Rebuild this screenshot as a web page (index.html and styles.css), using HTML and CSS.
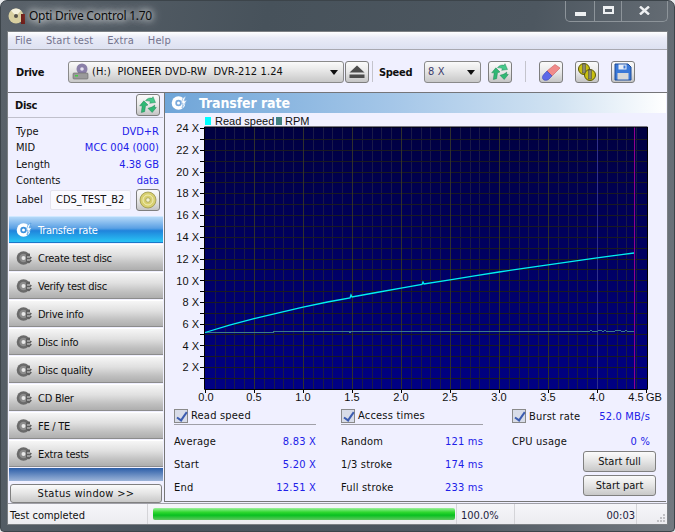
FILE: index.html
```html
<!DOCTYPE html>
<html lang="en">
<head>
<meta charset="utf-8">
<title>Opti Drive Control 1.70</title>
<link rel="stylesheet" href="styles.css">
</head>
<body>
<svg class="defs" width="0" height="0">
  <defs>
    <symbol id="swirl" viewBox="0 0 24 24">
      <path d="M4 21l1-8-3 0 5-6 5 5-3 1-1 7z" fill="#2fb874" stroke="#14794a" stroke-width=".5"/>
      <path d="M9 7c2-3 5-4 8-3l1-2 3 7-7 1 1-2c-2-1-4-1-6-1z" fill="#45c98a" stroke="#14794a" stroke-width=".5"/>
      <path d="M20 12l0 3 2 0-5 6-5-5 3-1c1 0 3-1 5-3z" fill="#2fb874" stroke="#14794a" stroke-width=".5"/>
    </symbol>
    <symbol id="navdisc" viewBox="0 0 16 16">
      <circle cx="7.5" cy="8" r="6.8" fill="#6a6a6a"/>
      <circle cx="7.5" cy="8" r="4.2" fill="#8c8c8c"/>
      <circle cx="7.5" cy="8" r="2" fill="#e8e8e8"/>
      <path d="M10 4.5l4-1v3l2 1-2 2 2 1-3 3-3-2z" fill="#5e5e5e"/>
      <path d="M11 7h3M11 10h3" stroke="#d8d8d8" stroke-width="1"/>
    </symbol>
  </defs>
</svg>
<div class="window">
  <header class="titlebar">
    <svg class="logo" width="18" height="18" viewBox="0 0 18 18">
      <circle cx="8" cy="9" r="7.5" fill="#d8cfa0"/>
      <path d="M8 9L3 3.5A7.5 7.5 0 0 1 13 3.5z" fill="#f4f0dc"/>
      <circle cx="8" cy="9" r="2" fill="#55514a"/>
      <rect x="13" y="7" width="4" height="10" fill="#6e1c18"/>
    </svg>
    <span class="apptitle">Opti Drive Control 1.70</span>
    <div class="winbtns">
      <span class="winbtn wb-min"><i></i></span>
      <span class="winbtn wb-max"><i></i></span>
      <span class="winbtn wb-close">
        <svg width="11" height="9" viewBox="0 0 11 9"><path d="M1 .5l9 8M10 .5l-9 8" stroke="#eef0f2" stroke-width="2.4"/></svg>
      </span>
    </div>
  </header>

  <div class="client">
    <nav class="menu">
      <span>File</span><span>Start test</span><span>Extra</span><span>Help</span>
    </nav>

    <div class="toolbar">
      <b class="tb-label drive-label">Drive</b>
      <div class="combo drive-combo">
        <svg class="drive-ico" width="18" height="18" viewBox="0 0 18 18">
          <circle cx="10" cy="6" r="5.5" fill="#8a7fa8"/>
          <circle cx="10" cy="6" r="1.8" fill="#e6e2f0"/>
          <rect x="1" y="10" width="15" height="6" rx="1" fill="#9a9a9a" stroke="#666" stroke-width=".6"/>
          <rect x="3" y="12" width="3" height="1.5" fill="#4c4"/>
        </svg>
        <span class="combo-text">(H:)&nbsp; PIONEER DVD-RW&nbsp; DVR-212 1.24</span>
        <i class="arrow"></i>
      </div>
      <button class="iconbtn eject">
        <svg width="16" height="14" viewBox="0 0 16 14"><path d="M8 .5L15.500 7.500H.5z" fill="#4c4c4c"/><rect x=".5" y="9.500" width="15" height="3.500" fill="#4c4c4c"/></svg>
      </button>
      <span class="vsep sep-a"></span>
      <b class="tb-label speed-label">Speed</b>
      <div class="combo speed-combo"><span class="combo-text speedval">8 X</span><i class="arrow"></i></div>
      <button class="iconbtn refresh-a"><svg width="20" height="20"><use href="#swirl"/></svg></button>
      <span class="vsep sep-b"></span>
      <button class="iconbtn">
        <svg width="20" height="18" viewBox="0 0 20 18">
          <path d="M6 8L14 1.500 19 5 11 13z" fill="#f08a8a" stroke="#c86060" stroke-width=".6"/>
          <path d="M6 8l5 5-3.500 3.500C5 18 2 17.500 1.500 15c-.3-2 1-3.500 4.500-7z" fill="#5c68e8" stroke="#3a44b0" stroke-width=".6"/>
        </svg>
      </button>
      <button class="iconbtn gapped">
        <svg width="20" height="20" viewBox="0 0 20 20">
          <circle cx="7" cy="7" r="5.500" fill="#c9c010" stroke="#5c5808"/>
          <circle cx="13" cy="13" r="5.500" fill="#c9c010" stroke="#5c5808"/>
          <rect x="5.500" y="2" width="3" height="9" fill="#8a8a70" stroke="#444" stroke-width=".5"/>
          <rect x="11.500" y="8" width="3" height="9" fill="#8a8a70" stroke="#444" stroke-width=".5"/>
        </svg>
      </button>
      <button class="iconbtn gapped">
        <svg width="18" height="18" viewBox="0 0 18 18">
          <path d="M1 1h13l3 3v13H1z" fill="#3a78d8" stroke="#1c4a98"/>
          <rect x="4.500" y="1.500" width="8" height="5" fill="#e8eef8"/>
          <rect x="9.500" y="2.500" width="2" height="3" fill="#3a78d8"/>
          <rect x="3.500" y="10" width="11" height="6.500" fill="#d8d8d8"/>
        </svg>
      </button>
    </div>

    <div class="main">
      <aside class="side">
        <div class="disc-head">
          <b>Disc</b>
          <button class="iconbtn"><svg width="20" height="20"><use href="#swirl"/></svg></button>
        </div>
        <dl class="disc-info">
          <div><dt>Type</dt><dd>DVD+R</dd></div>
          <div><dt>MID</dt><dd>MCC 004 (000)</dd></div>
          <div><dt>Length</dt><dd>4.38 GB</dd></div>
          <div><dt>Contents</dt><dd>data</dd></div>
        </dl>
        <div class="label-row">
          <span>Label</span>
          <span class="label-field">CDS_TEST_B2</span>
          <button class="iconbtn">
            <svg width="18" height="18" viewBox="0 0 18 18">
              <circle cx="9" cy="9" r="8" fill="#d8d070" stroke="#8f8a40" stroke-width=".7"/>
              <circle cx="9" cy="9" r="5" fill="none" stroke="#f2eeb8"/>
              <circle cx="9" cy="9" r="2.200" fill="#f4f2d0" stroke="#8f8a40" stroke-width=".6"/>
            </svg>
          </button>
        </div>
        <div class="navlist">
          <a class="navbtn active">
            <svg width="16" height="16" viewBox="0 0 16 16">
              <circle cx="7.500" cy="8" r="6.800" fill="#fff"/><circle cx="7.500" cy="8" r="3.200" fill="#3a90dc"/><circle cx="7.500" cy="8" r="1.500" fill="#fff"/>
              <path d="M12 3l3-2-2 5 3-1-5 8 1-5-2 .5z" fill="#fff" stroke="#3a90dc" stroke-width=".6"/>
            </svg><span>Transfer rate</span>
          </a>
          <a class="navbtn"><svg width="16" height="16"><use href="#navdisc"/></svg><span>Create test disc</span></a>
          <a class="navbtn"><svg width="16" height="16"><use href="#navdisc"/></svg><span>Verify test disc</span></a>
          <a class="navbtn"><svg width="16" height="16"><use href="#navdisc"/></svg><span>Drive info</span></a>
          <a class="navbtn"><svg width="16" height="16"><use href="#navdisc"/></svg><span>Disc info</span></a>
          <a class="navbtn"><svg width="16" height="16"><use href="#navdisc"/></svg><span>Disc quality</span></a>
          <a class="navbtn"><svg width="16" height="16"><use href="#navdisc"/></svg><span>CD Bler</span></a>
          <a class="navbtn"><svg width="16" height="16"><use href="#navdisc"/></svg><span>FE / TE</span></a>
          <a class="navbtn"><svg width="16" height="16"><use href="#navdisc"/></svg><span>Extra tests</span></a>
        </div>
        <div class="nav-band"></div>
        <button class="status-btn">Status window &gt;&gt;</button>
      </aside>

      <section class="panel">
        <div class="panel-title">
          <svg width="16" height="16" viewBox="0 0 16 16">
            <circle cx="7.500" cy="8" r="6.800" fill="#fff"/><circle cx="7.500" cy="8" r="3.200" fill="#7aaadc"/><circle cx="7.500" cy="8" r="1.500" fill="#fff"/>
            <path d="M12 3l3-2-2 5 3-1-5 8 1-5-2 .5z" fill="#fff" stroke="#7aaadc" stroke-width=".6"/>
          </svg>
          <span>Transfer rate</span>
        </div>

        <svg class="chart" width="500" height="292" viewBox="165 113 500 292">
          <defs>
            <linearGradient id="plotbg" x1="0" y1="0" x2="0" y2="1">
              <stop offset="0" stop-color="#000040"/>
              <stop offset="1" stop-color="#000084"/>
            </linearGradient>
          </defs>
          <rect x="205" y="117" width="6" height="8" fill="#00ffff"/>
          <text class="lg" x="215" y="125">Read speed</text>
          <rect x="276" y="117" width="6" height="8" fill="#408080"/>
          <text class="lg" x="285" y="125">RPM</text>

          <rect x="205" y="127" width="442" height="262" fill="url(#plotbg)"/>
          <path class="grid-minor" d="M215 127V389M225 127V389M234 127V389M244 127V389M264 127V389M274 127V389M283 127V389M293 127V389M313 127V389M323 127V389M332 127V389M342 127V389M362 127V389M372 127V389M381 127V389M391 127V389M411 127V389M421 127V389M430 127V389M440 127V389M460 127V389M470 127V389M479 127V389M489 127V389M509 127V389M519 127V389M528 127V389M538 127V389M558 127V389M568 127V389M577 127V389M587 127V389M607 127V389M617 127V389M626 127V389M636 127V389"/>
          <path class="grid-h" d="M205 378H647M205 367H647M205 356H647M205 345H647M205 334H647M205 324H647M205 313H647M205 302H647M205 291H647M205 280H647M205 269H647M205 259H647M205 248H647M205 237H647M205 226H647M205 215H647M205 204H647M205 193H647M205 182H647M205 172H647M205 161H647M205 150H647M205 139H647"/>
          <path class="grid-major" d="M254 127V389M303 127V389M352 127V389M401 127V389M450 127V389M499 127V389M548 127V389"/>
          <path class="grid-blue" d="M597 127V389"/>
          <path class="endline" d="M634 127V389"/>
          <polyline class="rpm" points="205,332 273,332 273,331 349,331 350,333 351,331 590,331 591,330 592,331 598,331 599,330 601,330 602,331 604,331 605,330 606,331 615,331 616,330 620,330 621,331 625,331 626,330 627,331 634,331"/>
          <polyline class="speed" points="205,332.500 229.500,325.200 254,318.700 278.500,312.800 303,307.200 327.500,302 350,298 351,295 352,297 376.500,292.500 401,288.100 422,284.500 423,282 424,284 450,279.800 474.500,275.800 499,272 523.500,268.300 548,264.800 572.500,261.300 597,257.900 621.500,254.600 634,253"/>
          <path class="axis" d="M204.500 127V389.500H647.500V127H204.500"/>
          <path class="ticks" d="M200 128H205M200 139H205M200 150H205M200 161H205M200 172H205M200 182H205M200 193H205M200 204H205M200 215H205M200 226H205M200 237H205M200 248H205M200 259H205M200 269H205M200 280H205M200 291H205M200 302H205M200 313H205M200 324H205M200 334H205M200 345H205M200 356H205M200 367H205M200 378H205M205 389V393M254 389V393M303 389V393M352 389V393M401 389V393M450 389V393M499 389V393M548 389V393M597 389V393M646 389V393"/>
          <g class="ylab">
            <text x="199" y="132">24 X</text><text x="199" y="154">22 X</text><text x="199" y="176">20 X</text>
            <text x="199" y="197">18 X</text><text x="199" y="219">16 X</text><text x="199" y="241">14 X</text>
            <text x="199" y="263">12 X</text><text x="199" y="285">10 X</text><text x="199" y="306">8 X</text>
            <text x="199" y="328">6 X</text><text x="199" y="350">4 X</text><text x="199" y="371">2 X</text>
          </g>
          <g class="xlab">
            <text x="206" y="401">0.0</text><text x="254" y="401">0.5</text><text x="303" y="401">1.0</text>
            <text x="352" y="401">1.5</text><text x="401" y="401">2.0</text><text x="450" y="401">2.5</text>
            <text x="499" y="401">3.0</text><text x="548" y="401">3.5</text><text x="597" y="401">4.0</text>
            <text x="636" y="401">4.5</text><text x="654" y="401">GB</text>
          </g>
        </svg>

        <div class="stats">
          <div class="col">
            <label class="head"><i class="check"></i>Read speed</label>
            <div class="row"><span>Average</span><em>8.83 X</em></div>
            <div class="row"><span>Start</span><em>5.20 X</em></div>
            <div class="row"><span>End</span><em>12.51 X</em></div>
          </div>
          <div class="col">
            <label class="head"><i class="check"></i>Access times</label>
            <div class="row"><span>Random</span><em>121 ms</em></div>
            <div class="row"><span>1/3 stroke</span><em>174 ms</em></div>
            <div class="row"><span>Full stroke</span><em>233 ms</em></div>
          </div>
          <div class="col col-3">
            <div class="head plain"><label class="chk"><i class="check"></i>Burst rate</label><em>52.0 MB/s</em></div>
            <div class="row"><span>CPU usage</span><em>0 %</em></div>
            <button class="startbtn first">Start full</button>
            <button class="startbtn">Start part</button>
          </div>
        </div>
      </section>
    </div>

    <footer class="statusbar">
      <span class="st-msg">Test completed</span>
      <span class="st-prog"><i></i></span>
      <span class="st-pct">100.0%</span>
      <span class="st-time">00:03</span>
      <span class="st-grip"><svg width="10" height="10" viewBox="0 0 10 10"><path d="M7 1h2v2H7zM4 4h2v2H4zM7 4h2v2H7zM1 7h2v2H1zM4 7h2v2H4zM7 7h2v2H7z" fill="#c0c0c4"/></svg></span>
    </footer>
  </div>
</div>
</body>
</html>
```
FILE: styles.css
```css
* { box-sizing: border-box; }
html, body { margin: 0; padding: 0; background: #e8eaec; }
body { width: 675px; height: 532px; overflow: hidden; font: 11px "DejaVu Sans Condensed", "DejaVu Sans", sans-serif; color: #101010; }
.defs { position: absolute; }
button { font: inherit; color: inherit; padding: 0; }
b { font-weight: 700; }

.window {
  width: 675px; height: 532px; padding-bottom: 6px;
  border-radius: 7px 7px 4px 4px;
  border: 1px solid #3c444a;
  background: linear-gradient(100deg, #5a626a 0, #47525b 35%, #4d5760 70%, #737980 100%);
  display: flex; flex-direction: column;
}
.titlebar { height: 30px; flex: none; display: flex; align-items: flex-start; padding-left: 7px; }
.logo { margin-top: 6px; }
.apptitle {
  margin: 5px 0 0 3px; font: 12px/20px "Noto Sans", sans-serif; color: #0c0c0c; letter-spacing: -.25px;
  text-shadow: 0 0 6px #fff, 0 0 10px rgba(255,255,255,.8), 0 0 14px rgba(255,255,255,.6);
}
.winbtns {
  margin-left: auto; margin-right: 6px; height: 21px; display: flex;
  border: 1px solid #8d949a; border-top: 0; border-radius: 0 0 5px 5px;
}
.winbtn { display: flex; align-items: center; justify-content: center; height: 100%; border-left: 1px solid #8d949a; }
.wb-min { width: 28px; border-left: 0; }
.wb-max { width: 27px; }
.wb-close { width: 46px; }
.wb-min i { width: 11px; height: 4px; background: #eef0f2; margin-top: 5px; }
.wb-max i { width: 11px; height: 8px; border: 2px solid #eef0f2; border-top-width: 3px; margin-top: -2px; }
.wb-close svg { margin-top: -2px; }

.client { margin: 0 6px; flex: 1; min-height: 0; background: #f0f0ff; border: 1px solid #7c8084; display: flex; flex-direction: column; }
.menu {
  height: 18px; flex: none; display: flex; gap: 14px; padding-left: 7px;
  background: linear-gradient(#ffffff 0, #e9ebf7 35%, #dde1f1 100%);
  border-bottom: 1px solid #a8a8b0; color: #74748e; line-height: 18px; letter-spacing: .1px;
}

.toolbar { height: 43px; flex: none; display: flex; align-items: center; border-bottom: 1px solid #757579; padding-top: 1px; }
.tb-label { letter-spacing: -.3px; padding-top: 2px; }
.drive-label { margin-left: 8px; width: 52px; }
.combo {
  height: 22px; border: 1px solid #8a8a8a; border-radius: 3px;
  background: linear-gradient(#fafafa, #e6e6e6 45%, #c8c8c8);
  display: flex; align-items: center; position: relative;
}
.drive-combo { width: 276px; padding-left: 3px; }
.drive-ico { flex: none; }
.combo-text { margin-left: 2px; white-space: nowrap; letter-spacing: .1px; }
.arrow { position: absolute; right: 5px; top: 8px; border: 4px solid transparent; border-top: 5px solid #101010; border-bottom: 0; }
.iconbtn {
  width: 24px; height: 22px; flex: none; border: 1px solid #7e7e7e; border-radius: 3px;
  background: linear-gradient(#fbfbfb, #e8e8e8 50%, #c4c4c4);
  display: inline-flex; align-items: center; justify-content: center;
}
.eject { margin-left: 1px; }
.vsep { width: 1px; height: 21px; background: #c4c4cc; flex: none; }
.sep-a { margin: 0 6px 0 3px; }
.speed-label { width: 45px; }
.speed-combo { width: 57px; }
.speedval { margin-left: 3px; color: #3c3c6c; }
.refresh-a { margin-left: 7px; }
.sep-b { margin: 0 13px; }
.gapped { margin-left: 12px; }

.main { flex: 1; min-height: 0; display: flex; }
.side { width: 156px; flex: none; display: flex; flex-direction: column; padding: 0 1px 0 1px; }
.disc-head { height: 26px; display: flex; align-items: center; justify-content: space-between; padding: 0 3px 0 7px; border-bottom: 1px solid #c0c0cc; margin-left: -1px; }
.disc-head b { letter-spacing: -.3px; }
.disc-info { margin: 6px 0 0; padding: 0 4px 0 7px; }
.disc-info div { display: flex; justify-content: space-between; height: 16.300px; line-height: 16px; }
.disc-info dd { margin: 0; color: #2020e8; }
.label-row { display: flex; align-items: center; height: 24px; margin-top: -1px; padding: 0 2px 0 7px; }
.label-field { width: 81px; height: 20px; margin-left: 7px; margin-right: 5px; background: #fafaff; border: 1px solid #e4e4ee; border-radius: 2px; text-align: center; line-height: 18px; white-space: nowrap; }
.navlist { margin-top: 5px; display: flex; flex-direction: column; gap: 1px; }
.navbtn {
  height: 27px; display: flex; align-items: center; padding-left: 7px; gap: 6px;
  background: linear-gradient(#f6f6f6, #e0e0e0 40%, #c0c0c0 75%, #aeaeae);
  border-top: 1px solid #fff; border-bottom: 1px solid #8c8c8c; letter-spacing: -.25px;
}
.navbtn span { padding-top: 2px; }
.navbtn svg { flex: none; }
.navbtn.active { background: linear-gradient(#b4d8f8, #5aa0e4 45%, #2084dc 55%, #28c4f4); color: #fff; border-color: #d0e8ff #fff #1a78c8; }
.nav-band { height: 13px; margin-top: 1px; background: linear-gradient(#2c5ea8, #9cb4d8); }
.status-btn {
  height: 20px; margin: 3px 1px 0; border: 1px solid #808080; border-radius: 3px;
  background: linear-gradient(#fbfbfb, #e4e4e4 50%, #c8c8c8); text-align: center; letter-spacing: .3px;
}

.panel { flex: 1; min-width: 0; display: flex; flex-direction: column; border-left: 1px solid #767676; border-bottom: 1px solid #777; margin-right: 1px; margin-bottom: 1px; }
.panel-title {
  height: 20px; flex: none; display: flex; align-items: center; padding-left: 6px;
  background: linear-gradient(90deg, #6fa5d8 0, #a4c6e8 45%, #d0e2f2 78%, #ffffff 100%);
  color: #fff; font-weight: 700; font-size: 14px; letter-spacing: -.1px;
}
.panel-title span { margin-left: 12px; }
.chart { display: block; flex: none; font: 11px "Liberation Sans", Arial, sans-serif; }
.chart text { fill: #101010; }
.ylab text { text-anchor: end; }
.xlab text { text-anchor: middle; }
.grid-minor { stroke: #1a1a48; stroke-width: 1; shape-rendering: crispEdges; fill: none; }
.grid-h { stroke: #1a1a20; stroke-width: 1; shape-rendering: crispEdges; fill: none; }
.grid-major { stroke: #30302e; stroke-width: 1; shape-rendering: crispEdges; fill: none; }
.grid-blue { stroke: #303088; stroke-width: 1; shape-rendering: crispEdges; }
.endline { stroke: #900090; stroke-width: 1; shape-rendering: crispEdges; }
.rpm { fill: none; stroke: #3a7a88; stroke-width: 1; shape-rendering: crispEdges; }
.speed { fill: none; stroke: #00f0f0; stroke-width: 1.300; }
.axis { fill: none; stroke: #000; stroke-width: 1; }
.ticks { stroke: #000; stroke-width: 1; shape-rendering: crispEdges; }

.stats { flex: 1; min-height: 0; display: flex; padding-left: 9px; letter-spacing: .2px; }
.col { width: 142px; margin-right: 25px; }
.col-3 { width: 138px; margin: 0 0 0 4px; display: flex; flex-direction: column; }
.head { height: 20px; display: flex; align-items: center; border-bottom: 1px solid #a0a0a8; padding-top: 2px; }
.head.plain { border-bottom: 0; justify-content: space-between; }
.chk { display: flex; align-items: center; }
.check {
  width: 14px; height: 14px; margin-right: 3px; border: 1px solid #8a8a8a;
  background: #d8dce8; position: relative; display: block; flex: none;
}
.check::after {
  content: ""; position: absolute; left: 4px; top: 0; width: 4px; height: 9px;
  border: solid #3c5cb0; border-width: 0 2px 2px 0; transform: rotate(35deg);
}
.row { height: 23px; display: flex; align-items: center; justify-content: space-between; padding-top: 2px; }
.col > .row:nth-child(2) { margin-top: 4px; }
em { font-style: normal; color: #2020e8; }
.startbtn {
  height: 21px; width: 73px; align-self: flex-end; margin-right: -6px; margin-top: 3px;
  border: 1px solid #808080; border-radius: 3px; background: linear-gradient(#fbfbfb, #e4e4e4 50%, #c8c8c8);
}
.startbtn.first { margin-top: -1px; }

.statusbar { height: 21px; flex: none; display: flex; align-items: center; background: linear-gradient(#f6f6fa, #ececf0); border-top: 1px solid #a0a0a8; }
.statusbar > span { height: 100%; display: flex; align-items: center; border-right: 1px solid #d4d4d8; }
.st-msg { width: 140px; padding: 2px 0 0 2px; }
.st-prog { width: 309px; padding-left: 5px; padding-right: 1px; }
.st-prog i { display: block; width: 302px; height: 12px; border-radius: 2px; background: linear-gradient(#9cf09c, #30d830 35%, #08c020 60%, #60c860); }
.st-pct { width: 58px; padding: 2px 0 0 4px; color: #1c1c3c; }
.st-time { width: 122px; justify-content: flex-end; padding: 2px 1px 0 0; color: #1c1c3c; }
.statusbar > .st-grip { flex: 1; border-right: 0; justify-content: flex-end; align-items: flex-end; padding: 0 1px 1px 0; }
```
